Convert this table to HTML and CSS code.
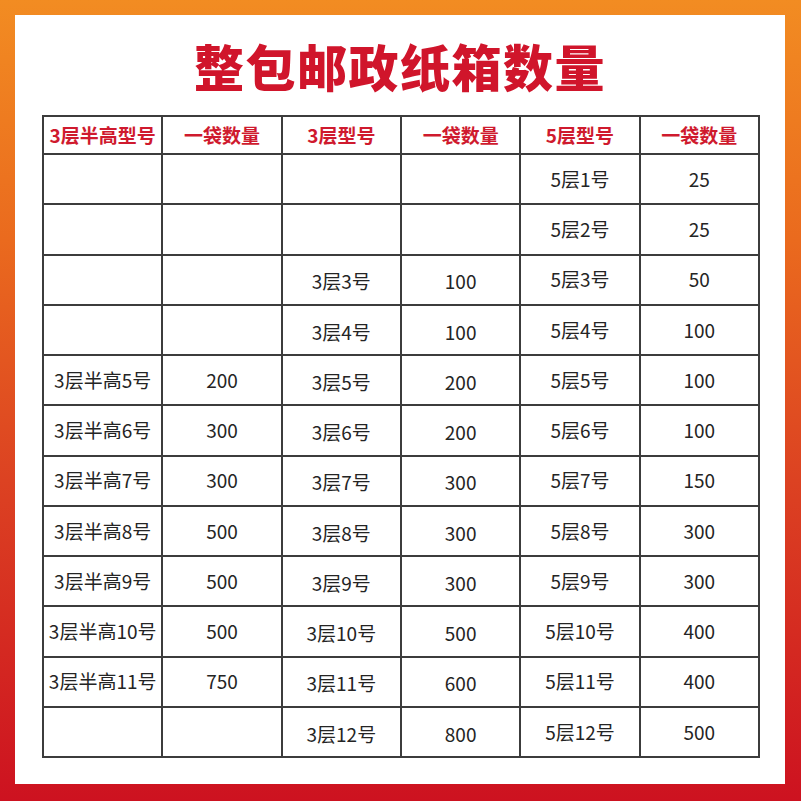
FILE: index.html
```html
<!DOCTYPE html>
<html lang="zh">
<head>
<meta charset="utf-8">
<link rel="stylesheet" href="styles.css">
</head>
<body>
<div class="frame">
  <div class="panel">
    <h1 class="title">整包邮政纸箱数量</h1>
    <table class="grid">
      <colgroup><col class="c"><col class="c"><col class="c"><col class="c"><col class="c"><col class="c"></colgroup>
      <thead>
        <tr class="head"><th>3层半高型号</th><th>一袋数量</th><th>3层型号</th><th>一袋数量</th><th>5层型号</th><th>一袋数量</th></tr>
      </thead>
      <tbody>
        <tr><td></td><td></td><td class="lo"></td><td class="lo"></td><td>5层1号</td><td>25</td></tr>
        <tr><td></td><td></td><td class="lo"></td><td class="lo"></td><td>5层2号</td><td>25</td></tr>
        <tr><td></td><td></td><td class="lo">3层3号</td><td class="lo">100</td><td>5层3号</td><td>50</td></tr>
        <tr><td></td><td></td><td class="lo">3层4号</td><td class="lo">100</td><td>5层4号</td><td>100</td></tr>
        <tr><td>3层半高5号</td><td>200</td><td class="lo">3层5号</td><td class="lo">200</td><td>5层5号</td><td>100</td></tr>
        <tr><td>3层半高6号</td><td>300</td><td class="lo">3层6号</td><td class="lo">200</td><td>5层6号</td><td>100</td></tr>
        <tr><td>3层半高7号</td><td>300</td><td class="lo">3层7号</td><td class="lo">300</td><td>5层7号</td><td>150</td></tr>
        <tr><td>3层半高8号</td><td>500</td><td class="lo">3层8号</td><td class="lo">300</td><td>5层8号</td><td>300</td></tr>
        <tr><td>3层半高9号</td><td>500</td><td class="lo">3层9号</td><td class="lo">300</td><td>5层9号</td><td>300</td></tr>
        <tr><td>3层半高10号</td><td>500</td><td class="lo">3层10号</td><td class="lo">500</td><td>5层10号</td><td>400</td></tr>
        <tr><td>3层半高11号</td><td>750</td><td class="lo">3层11号</td><td class="lo">600</td><td>5层11号</td><td>400</td></tr>
        <tr><td></td><td></td><td class="lo">3层12号</td><td class="lo">800</td><td>5层12号</td><td>500</td></tr>
      </tbody>
    </table>
  </div>
</div>
</body>
</html>
```

FILE: styles.css
```css
html, body {
  margin: 0;
  padding: 0;
  background: #fff;
}
.frame {
  width: 801px;
  height: 801px;
  box-sizing: border-box;
  padding: 15px 16px 17px 15px;
  background: linear-gradient(180deg, #f28c22 0%, #ea6a1e 30%, #dc4222 60%, #cd1220 100%);
}
.panel {
  width: 100%;
  height: 100%;
  background: #fff;
  box-sizing: border-box;
  padding-top: 20px;
  padding-left: 27px;
}
.title {
  margin: 0 0 20px -27px;
  height: 60px;
  line-height: 60px;
  text-align: center;
  font-family: "Noto Sans CJK SC", sans-serif;
  font-size: 50px;
  font-weight: 900;
  color: #d0152b;
  letter-spacing: 1.5px;
}
.grid {
  border-collapse: collapse;
  table-layout: fixed;
  width: 718px;
  font-family: "Noto Sans CJK SC", sans-serif;
}
.grid col.c {
  width: 16.666%;
}
.grid tr {
  height: 50.25px;
}
.grid tr.head {
  height: 38px;
}
.grid th, .grid td {
  border: 2px solid #3c3c3c;
  text-align: center;
  vertical-align: middle;
  padding: 0;
  line-height: 1.3;
}
.grid th {
  font-size: 19px;
  font-weight: 700;
  color: #cf1a2e;
}
.grid td {
  font-size: 19px;
  font-weight: 400;
  color: #242424;
}
.grid td.lo {
  padding-top: 4px;
}
```
